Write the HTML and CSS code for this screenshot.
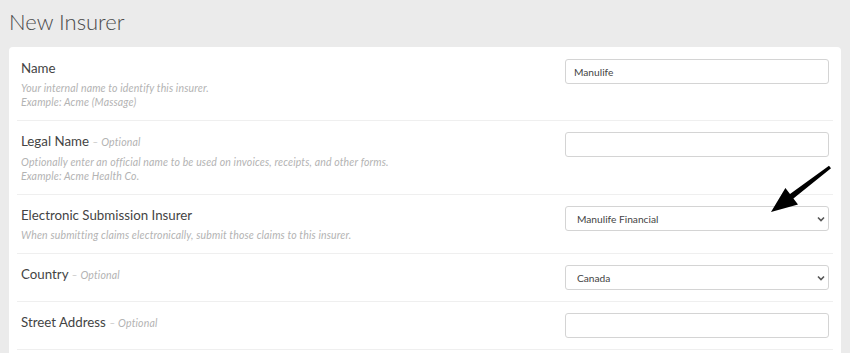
FILE: index.html
```html
<!DOCTYPE html>
<html lang="en">
<head>
  <meta charset="UTF-8">
  <meta name="viewport" content="width=device-width, initial-scale=1.0">
  <title>New Insurer</title>
  <link rel="stylesheet" href="styles.css">
</head>
<body>
  <h1 class="page-title">New Insurer</h1>

  <div class="card">
    <div class="field">
      <div class="field-info">
        <div class="label">Name</div>
        <div class="hint">Your internal name to identify this insurer.<br>Example: Acme (Massage)</div>
      </div>
      <input class="control" type="text" value="Manulife">
    </div>

    <div class="field">
      <div class="field-info">
        <div class="label">Legal Name <span class="optional">&ndash; Optional</span></div>
        <div class="hint">Optionally enter an official name to be used on invoices, receipts, and other forms.<br>Example: Acme Health Co.</div>
      </div>
      <input class="control" type="text" value="">
    </div>

    <div class="field">
      <div class="field-info">
        <div class="label">Electronic Submission Insurer</div>
        <div class="hint">When submitting claims electronically, submit those claims to this insurer.</div>
      </div>
      <div class="select-wrap">
        <select class="control">
          <option>Manulife Financial</option>
        </select>
        <svg class="chevron" width="8" height="6" viewBox="0 0 8 6"><path d="M1 1.5 L4 4.5 L7 1.5" fill="none" stroke="#555" stroke-width="1.6"/></svg>
      </div>
    </div>

    <div class="field">
      <div class="field-info">
        <div class="label">Country <span class="optional">&ndash; Optional</span></div>
      </div>
      <div class="select-wrap">
        <select class="control">
          <option>Canada</option>
        </select>
        <svg class="chevron" width="8" height="6" viewBox="0 0 8 6"><path d="M1 1.5 L4 4.5 L7 1.5" fill="none" stroke="#555" stroke-width="1.6"/></svg>
      </div>
    </div>

    <div class="field">
      <div class="field-info">
        <div class="label">Street Address <span class="optional">&ndash; Optional</span></div>
      </div>
      <input class="control" type="text" value="">
    </div>
  </div>

  <!-- callout arrow pointing at the insurer dropdown -->
  <svg class="callout" width="80" height="60" viewBox="0 0 80 60">
    <polygon points="11,52 38,44.5 33.4,38.4 71,8.3 69,5.7 30,34 25.4,28" fill="#000"/>
  </svg>
</body>
</html>
```

FILE: styles.css
```css
body {
  margin: 0;
  background: #ebebeb;
  font-family: Lato, "Open Sans", Arial, sans-serif;
  color: #444;
}
.page-title {
  margin: 0;
  padding: 8px 9px 0;
  height: 39px;
  font-size: 22px;
  font-weight: 300;
  line-height: 28px;
  color: #4a4a4a;
}
.card {
  margin: 0 9px;
  background: #fff;
  border-radius: 4px;
  padding: 1px 8px 0;
  height: 320px;
}
.field {
  display: flex;
  justify-content: space-between;
  align-items: flex-start;
  padding: 11px 4px;
  border-bottom: 1px solid #efefef;
}
.label {
  font-size: 13.3px;
  line-height: 18px;
  color: #444;
}
.optional {
  font-size: 10.5px;
  letter-spacing: 0.15px;
  font-style: italic;
  color: #b3b3b3;
}
.hint {
  margin-top: 4px;
  font-size: 10.5px;
  letter-spacing: 0.15px;
  line-height: 14px;
  font-style: italic;
  color: #b3b3b3;
}
.control {
  box-sizing: border-box;
  width: 264px;
  height: 25px;
  margin: 0;
  padding: 0 8px;
  border: 1px solid #d4d4d4;
  border-radius: 3px;
  background: #fff;
  font-family: Lato, "Open Sans", Arial, sans-serif;
  font-size: 10.2px;
  color: #444;
  outline: none;
}
.select-wrap {
  position: relative;
}
select.control {
  appearance: none;
  -webkit-appearance: none;
  padding-left: 11px;
}
.chevron {
  position: absolute;
  right: 4px;
  top: 10px;
  pointer-events: none;
}
.callout {
  position: absolute;
  left: 760px;
  top: 160px;
}
```
